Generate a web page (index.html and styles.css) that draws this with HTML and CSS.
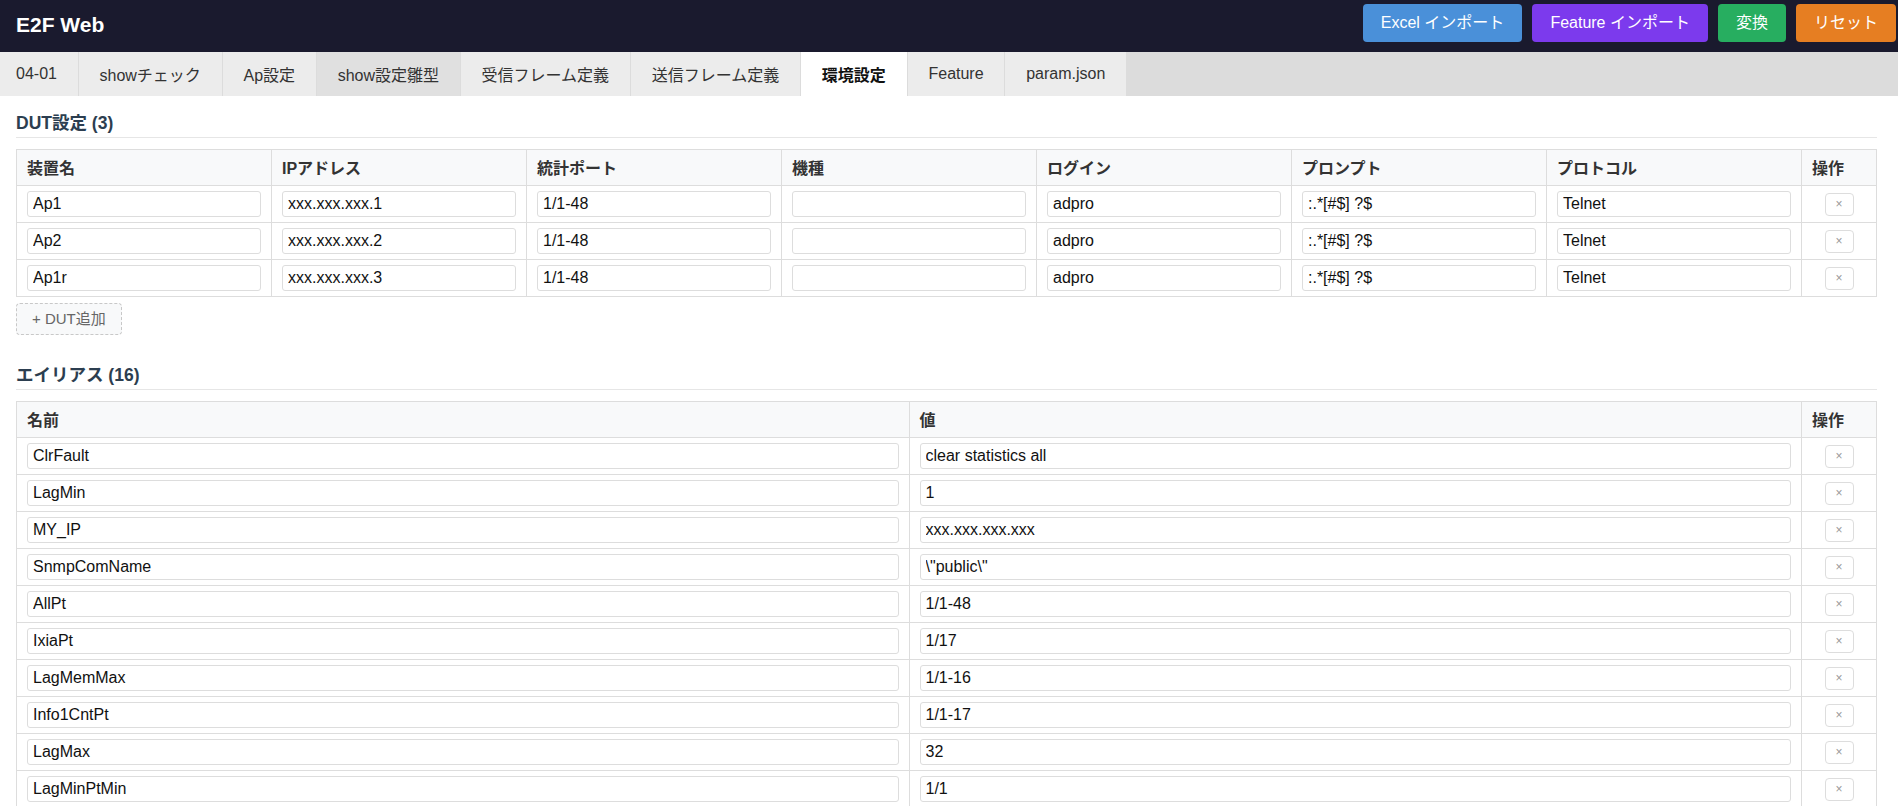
FILE: index.html
```html
<!DOCTYPE html>
<html lang="ja">
<head>
<meta charset="utf-8">
<title>E2F Web</title>
<link rel="stylesheet" href="styles.css">
</head>
<body>
<header class="topbar">
  <h1 class="brand">E2F Web</h1>
  <div class="actions">
    <button class="btn btn-blue">Excel インポート</button>
    <button class="btn btn-purple">Feature インポート</button>
    <button class="btn btn-green">変換</button>
    <button class="btn btn-orange">リセット</button>
  </div>
</header>
<nav class="tabs">
  <div class="tab">04-01</div>
  <div class="tab">showチェック</div>
  <div class="tab">Ap設定</div>
  <div class="tab hover">show設定雛型</div>
  <div class="tab">受信フレーム定義</div>
  <div class="tab">送信フレーム定義</div>
  <div class="tab active">環境設定</div>
  <div class="tab">Feature</div>
  <div class="tab">param.json</div>
</nav>
<main class="main">
  <section class="section">
    <h2 class="section-title">DUT設定 (3)</h2>
    <table class="grid">
      <thead>
        <tr><th>装置名</th><th>IPアドレス</th><th>統計ポート</th><th>機種</th><th>ログイン</th><th>プロンプト</th><th>プロトコル</th><th class="ops">操作</th></tr>
      </thead>
      <tbody>
        <tr>
          <td><input class="field" value="Ap1"></td>
          <td><input class="field" value="xxx.xxx.xxx.1"></td>
          <td><input class="field" value="1/1-48"></td>
          <td><input class="field" value=""></td>
          <td><input class="field" value="adpro"></td>
          <td><input class="field" value=":.*[#$] ?$"></td>
          <td><input class="field" value="Telnet"></td>
          <td class="ops"><button class="del">×</button></td>
        </tr>
        <tr>
          <td><input class="field" value="Ap2"></td>
          <td><input class="field" value="xxx.xxx.xxx.2"></td>
          <td><input class="field" value="1/1-48"></td>
          <td><input class="field" value=""></td>
          <td><input class="field" value="adpro"></td>
          <td><input class="field" value=":.*[#$] ?$"></td>
          <td><input class="field" value="Telnet"></td>
          <td class="ops"><button class="del">×</button></td>
        </tr>
        <tr>
          <td><input class="field" value="Ap1r"></td>
          <td><input class="field" value="xxx.xxx.xxx.3"></td>
          <td><input class="field" value="1/1-48"></td>
          <td><input class="field" value=""></td>
          <td><input class="field" value="adpro"></td>
          <td><input class="field" value=":.*[#$] ?$"></td>
          <td><input class="field" value="Telnet"></td>
          <td class="ops"><button class="del">×</button></td>
        </tr>
      </tbody>
    </table>
    <button class="add">+ DUT追加</button>
  </section>
  <section class="section">
    <h2 class="section-title">エイリアス (16)</h2>
    <table class="grid">
      <thead>
        <tr><th>名前</th><th>値</th><th class="ops">操作</th></tr>
      </thead>
      <tbody>
        <tr><td><input class="field" value="ClrFault"></td><td><input class="field" value="clear statistics all"></td><td class="ops"><button class="del">×</button></td></tr>
        <tr><td><input class="field" value="LagMin"></td><td><input class="field" value="1"></td><td class="ops"><button class="del">×</button></td></tr>
        <tr><td><input class="field" value="MY_IP"></td><td><input class="field" value="xxx.xxx.xxx.xxx"></td><td class="ops"><button class="del">×</button></td></tr>
        <tr><td><input class="field" value="SnmpComName"></td><td><input class="field" value='\"public\"'></td><td class="ops"><button class="del">×</button></td></tr>
        <tr><td><input class="field" value="AllPt"></td><td><input class="field" value="1/1-48"></td><td class="ops"><button class="del">×</button></td></tr>
        <tr><td><input class="field" value="IxiaPt"></td><td><input class="field" value="1/17"></td><td class="ops"><button class="del">×</button></td></tr>
        <tr><td><input class="field" value="LagMemMax"></td><td><input class="field" value="1/1-16"></td><td class="ops"><button class="del">×</button></td></tr>
        <tr><td><input class="field" value="Info1CntPt"></td><td><input class="field" value="1/1-17"></td><td class="ops"><button class="del">×</button></td></tr>
        <tr><td><input class="field" value="LagMax"></td><td><input class="field" value="32"></td><td class="ops"><button class="del">×</button></td></tr>
        <tr><td><input class="field" value="LagMinPtMin"></td><td><input class="field" value="1/1"></td><td class="ops"><button class="del">×</button></td></tr>
      </tbody>
    </table>
  </section>
</main>
</body>
</html>
```
FILE: styles.css
```css
* { box-sizing: border-box; }

html, body {
  margin: 0;
  height: 100%;
  overflow: hidden;
}

body {
  font-family: "Liberation Sans", "Noto Sans CJK JP", sans-serif;
  color: #333;
  background: #fff;
}

.topbar {
  height: 52px;
  background: #1a1a2e;
  display: flex;
  align-items: center;
  justify-content: space-between;
  padding: 0 2px 7px 16px;
}

.brand {
  margin: 0;
  padding-top: 5px;
  font-size: 21px;
  font-weight: bold;
  color: #fff;
}

.actions {
  display: flex;
  gap: 10px;
}

.btn {
  border: none;
  border-radius: 4px;
  color: #fff;
  font-family: "Liberation Sans", "Noto Sans CJK JP", sans-serif;
  font-size: 16px;
  line-height: 18px;
  padding: 10px 18px;
}

.btn-blue { background: #4a90d9; }
.btn-purple { background: #7c3aed; }
.btn-green { background: #27ae60; }
.btn-orange { background: #e67e22; }

.tabs {
  display: flex;
  height: 44px;
  background: #dcdcdc;
}

.tab {
  display: flex;
  align-items: center;
  padding: 0 20.8px;
  margin-right: 1px;
  background: #ececec;
  font-size: 16px;
  color: #333;
  white-space: nowrap;
}

.tab:first-child { padding-left: 16px; }
.tab.hover { background: #e0e0e0; }
.tab.active { background: #fff; font-weight: bold; color: #111; }

.main {
  padding: 17px 21px 16px 16px;
}

.section {
  margin-bottom: 30px;
}

.section-title {
  margin: 0 0 11px;
  padding-bottom: 4px;
  border-bottom: 1px solid #e6e6e6;
  font-size: 17.5px;
  line-height: 20px;
  font-weight: bold;
  color: #2c3e50;
}

.grid {
  width: 100%;
  border-collapse: collapse;
  table-layout: fixed;
}

.grid th,
.grid td {
  border: 1px solid #ddd;
  padding: 5px 10px;
  text-align: left;
}

.grid th {
  background: #f8f9fa;
  padding: 9px 10px 7px;
  font-size: 16px;
  line-height: 19px;
  font-weight: bold;
  color: #333;
}

.grid .ops {
  width: 75px;
  text-align: center;
}

.grid th.ops { text-align: left; }

.field {
  display: block;
  width: 100%;
  height: 26px;
  border: 1px solid #ddd;
  border-radius: 3px;
  padding: 0 5px;
  font-family: "Liberation Sans", "Noto Sans CJK JP", sans-serif;
  font-size: 16px;
  color: #111;
  background: #fff;
}

.del {
  width: 29px;
  height: 23px;
  padding: 0;
  border: 1px solid #ddd;
  border-radius: 4px;
  background: #fff;
  color: #999;
  font-family: "Liberation Sans", sans-serif;
  font-size: 12px;
}

.add {
  margin-top: 6px;
  padding: 7px 15px;
  border: 1px dashed #c8c8c8;
  border-radius: 4px;
  background: #f8f9fa;
  color: #666;
  font-family: "Liberation Sans", "Noto Sans CJK JP", sans-serif;
  font-size: 15px;
  line-height: 16px;
}
```
